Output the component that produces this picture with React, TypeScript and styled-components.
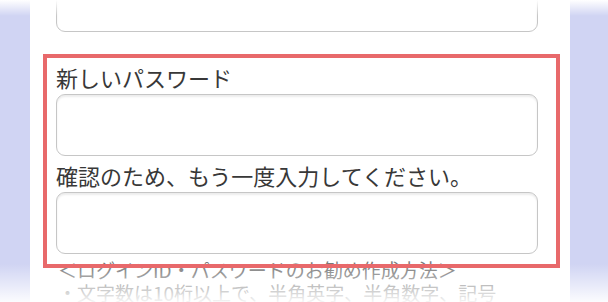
import styled, { createGlobalStyle } from 'styled-components'

const GlobalStyle = createGlobalStyle`
    html, body {
        margin: 0;
        padding: 0;
        background: #ffffff;
        overflow: hidden;
    }
    body {
        font-family: "Noto Sans CJK JP", "Noto Sans", sans-serif;
        color: #333333;
    }
`

const Screen = styled.div`
    position: relative;
    display: flex;
    width: 608px;
    height: 302px;
    overflow: hidden;
`

const Rail = styled.div<{ $width: number }>`
    flex: 0 0 ${(p) => p.$width}px;
    background: #d0d4f3;
`

const Column = styled.div`
    flex: 1;
    display: flex;
    flex-direction: column;
    padding: 0 32px 0 26px;
    background: #ffffff;
`

const Input = styled.div`
    flex: 0 0 auto;
    height: 62px;
    box-sizing: border-box;
    border: 1.5px solid #c6c6c6;
    border-radius: 9px;
    background: #ffffff;
    box-shadow: inset 0 2px 2px rgba(0, 0, 0, 0.08);
`

const TopInput = styled(Input)`
    margin-top: -30px;
`

const Label = styled.div<{ $gap: number }>`
    margin-top: ${(p) => p.$gap}px;
    margin-bottom: 1px;
    font-size: 22px;
    line-height: 32px;
    color: #383838;
    white-space: nowrap;
`

const Note = styled.div`
    margin-top: 4px;
    padding-left: 2px;
    font-size: 19px;
    line-height: 23px;
    color: #7a7a7a;
    white-space: nowrap;
`

const Highlight = styled.div`
    position: absolute;
    left: 43px;
    top: 54px;
    width: 517px;
    height: 214px;
    box-sizing: border-box;
    border: 4px solid #e8696b;
    pointer-events: none;
`

const Fade = styled.div<{ $edge: 'top' | 'bottom' }>`
    position: absolute;
    left: 0;
    right: 0;
    ${(p) => (p.$edge === 'top' ? 'top: 0; height: 16px;' : 'bottom: 0; height: 38px;')}
    background: ${(p) =>
        p.$edge === 'top'
            ? 'linear-gradient(to bottom, #ffffff, rgba(255,255,255,0))'
            : 'linear-gradient(to top, rgba(255,255,255,0.92), rgba(255,255,255,0.55) 40%, rgba(255,255,255,0))'};
    pointer-events: none;
`

const App = () => {
    return (
        <>
            <GlobalStyle />
            <Screen>
                <Rail $width={30} />
                <Column>
                    <TopInput />
                    <Label $gap={29}>新しいパスワード</Label>
                    <Input />
                    <Label $gap={3}>確認のため、もう一度入力してください。</Label>
                    <Input />
                    <Note>
                        ＜ログインID・パスワードのお勧め作成方法＞
                        <br />
                        ・文字数は10桁以上で、半角英字、半角数字、記号
                    </Note>
                </Column>
                <Rail $width={38} />
                <Fade $edge="top" />
                <Fade $edge="bottom" />
                <Highlight />
            </Screen>
        </>
    )
}

export default App
